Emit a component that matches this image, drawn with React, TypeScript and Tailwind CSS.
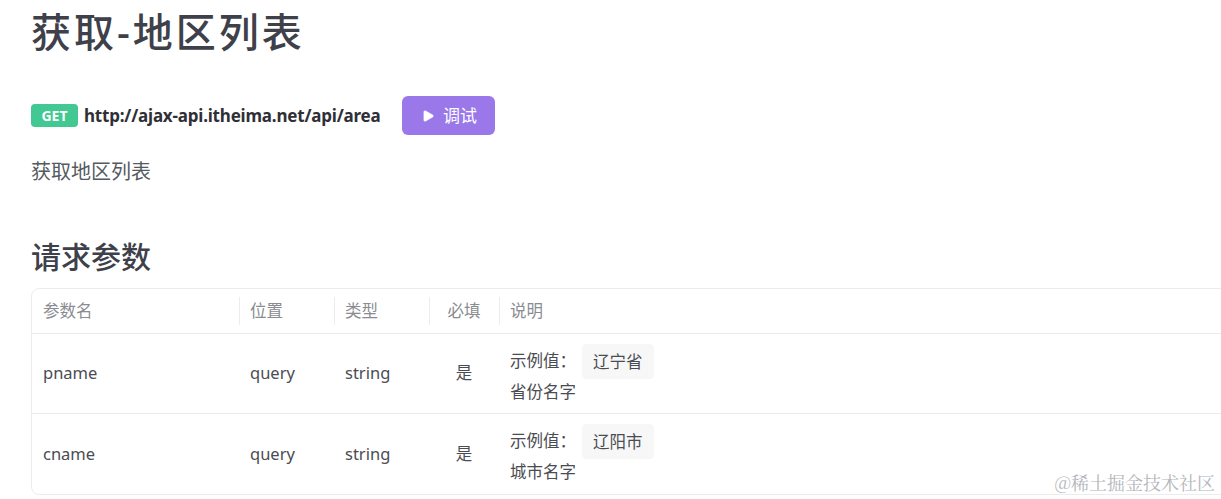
import { Play } from "lucide-react";

const FONT = { fontFamily: '"Noto Sans", "Noto Sans CJK SC", sans-serif' };

interface Param {
  name: string;
  position: string;
  type: string;
  required: string;
  example: string;
  desc: string;
}

const PARAMS: Param[] = [
  { name: "pname", position: "query", type: "string", required: "是", example: "辽宁省", desc: "省份名字" },
  { name: "cname", position: "query", type: "string", required: "是", example: "辽阳市", desc: "城市名字" },
];

export default function App() {
  return (
    <div
      className="relative w-[1221px] h-[499px] overflow-hidden bg-white pl-[31px] text-[#3d3f47]"
      style={FONT}
    >
      {/* Title */}
      <h1 className="pt-[6px] text-[40px] leading-[52px] font-medium tracking-[3px] text-[#3e404a]">
        获取-地区列表
      </h1>

      {/* Method + url */}
      <div className="mt-[38px] flex items-center">
        <span className="flex h-[23px] w-[47px] items-center justify-center rounded-[4px] bg-[#41c893] text-[14px] font-bold text-white">
          GET
        </span>
        <span className="ml-[6px] text-[17px] font-bold tracking-[-0.2px] text-[#2f3037]">
          http://ajax-api.itheima.net/api/area
        </span>
        <button className="ml-[22px] flex h-[39px] w-[93px] items-center justify-center gap-[8px] rounded-[6px] bg-[#9a78ea] text-[17px] text-white">
          <Play className="h-[14px] w-[14px] fill-white" strokeWidth={1} />
          <span>调试</span>
        </button>
      </div>

      {/* Description */}
      <p className="mt-[22px] text-[20px] leading-[30px] text-[#555a60]">获取地区列表</p>

      {/* Request params */}
      <h2 className="mt-[50px] text-[30px] leading-[40px] font-medium text-[#3e404a]">请求参数</h2>

      <div className="mt-[11px] w-[1260px] overflow-hidden rounded-[8px] border border-[#ececec] text-[16.5px]">
        <div className="flex h-[45px] items-center border-b border-[#ececec] text-[#8a8c91]">
          <div className="w-[207px] pl-[11px]">参数名</div>
          <HeaderCell className="w-[95px] pl-[11px]">位置</HeaderCell>
          <HeaderCell className="w-[95px] pl-[11px]">类型</HeaderCell>
          <HeaderCell className="w-[70px] justify-center">必填</HeaderCell>
          <HeaderCell className="flex-1 pl-[11px]">说明</HeaderCell>
        </div>
        {PARAMS.map((p, i) => (
          <div
            key={p.name}
            className={`flex h-[80px] items-center text-[#4a4c52] ${i < PARAMS.length - 1 ? "border-b border-[#ececec]" : ""}`}
          >
            <div className="w-[207px] pl-[11px]">{p.name}</div>
            <div className="w-[95px] pl-[11px]">{p.position}</div>
            <div className="w-[95px] pl-[11px]">{p.type}</div>
            <div className="w-[70px] text-center">{p.required}</div>
            <div className="flex-1 pl-[11px]">
              <div className="flex items-center">
                <span>示例值：</span>
                <span className="ml-[6px] rounded-[4px] bg-[#f7f7f8] px-[11px] leading-[35px]">{p.example}</span>
              </div>
              <div className="leading-[25px]">{p.desc}</div>
            </div>
          </div>
        ))}
      </div>

      <div
        className="absolute bottom-[3px] right-[6px] text-[18px] text-[#b4b6ba]"
        style={{ fontFamily: '"Noto Serif CJK SC", "Noto Sans CJK SC", serif' }}
      >
        @稀土掘金技术社区
      </div>
    </div>
  );
}

function HeaderCell({ className, children }: { className: string; children: React.ReactNode }) {
  return (
    <div className={`relative flex items-center ${className}`}>
      <span className="absolute left-0 top-1/2 h-[28px] -translate-y-1/2 border-l border-[#ececec]" />
      {children}
    </div>
  );
}
